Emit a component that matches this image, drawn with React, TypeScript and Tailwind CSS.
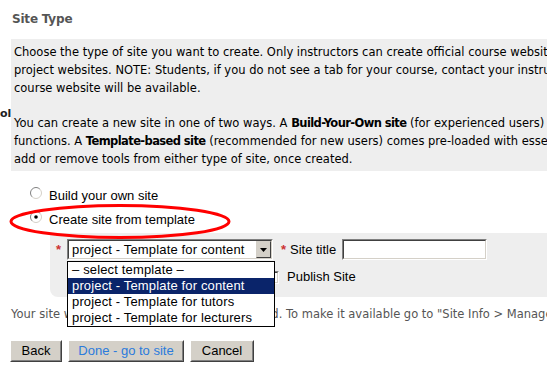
import React from "react";

const lib = "font-['Liberation_Sans',Arial,sans-serif]";

function Radio({ checked = false }: { checked?: boolean }) {
  return (
    <svg width="12" height="12" viewBox="0 0 12 12" className="mt-[3px] shrink-0">
      <circle cx="6" cy="6" r="5.5" fill="#fff" />
      <path d="M2.11 9.89A5.5 5.5 0 0 1 9.89 2.11" fill="none" stroke="#808080" />
      <path d="M9.89 2.11A5.5 5.5 0 0 1 2.11 9.89" fill="none" stroke="#d4d0c8" />
      {checked && <circle cx="6" cy="6" r="1.8" fill="#000" />}
    </svg>
  );
}

function Sunken({ className = "", children }: { className?: string; children?: React.ReactNode }) {
  return (
    <div className={`border border-t-[#808080] border-l-[#808080] border-b-white border-r-white ${className}`}>
      <div className="flex h-full border border-t-[#404040] border-l-[#404040] border-b-[#d4d0c8] border-r-[#d4d0c8] bg-white">
        {children}
      </div>
    </div>
  );
}

function Btn({ w, children, blue = false }: { w: string; children: React.ReactNode; blue?: boolean }) {
  return (
    <button
      className={`${w} h-[22px] border border-t-white border-l-white border-b-[#404040] border-r-[#404040] bg-[#d4d0c8] p-0`}
    >
      <div
        className={`flex h-full items-center justify-center border border-t-[#d4d0c8] border-l-[#d4d0c8] border-b-[#808080] border-r-[#808080] text-[13px] leading-[18px] ${
          blue ? "text-[#2b7bdc]" : "text-black"
        }`}
      >
        {children}
      </div>
    </button>
  );
}

const options = [
  "– select template –",
  "project - Template for content",
  "project - Template for tutors",
  "project - Template for lecturers",
];

export default function App() {
  return (
    <div className="relative h-[371px] w-[547px] overflow-hidden bg-white font-['DejaVu_Sans',Verdana,sans-serif] text-[11.5px] text-black">
      <h2 className="ml-[12px] pt-[11px] text-[12px] font-bold leading-[16px] tracking-[-0.2px] text-[#555]">
        Site Type
      </h2>

      <div className="mt-[12px] flex">
        <div className="w-[11px] shrink-0 overflow-hidden pt-[69px] text-[11px] font-bold leading-[12px] text-[#222]">
          ol
        </div>
        <div className="flex-1 whitespace-nowrap bg-[#eeeeee] px-[3px] pb-[3px] pt-[4px] leading-[18px]">
          <p>
            Choose the type of site you want to create. Only instructors can create official course websites and
            <br />
            project websites. NOTE: Students, if you do not see a tab for your course, contact your instructor. Your
            <br />
            course website will be available.
          </p>
          <p className="mt-[17px]">
            You can create a new site in one of two ways. A{" "}
            <b className="tracking-[-0.6px]">Build-Your-Own site</b> (for experienced users) lets you choose
            <br />
            functions. A <b className="tracking-[-0.6px]">Template-based site</b> (recommended for new users) comes
            pre-loaded with essential tools.
            <br />
            add or remove tools from either type of site, once created.
          </p>
        </div>
      </div>

      <div className={`ml-[30px] mt-[13px] ${lib} text-[13px]`}>
        <label className="flex h-[24px] items-start">
          <Radio />
          <span className="ml-[7px] leading-[24px]">Build your own site</span>
        </label>
        <label className="flex h-[24px] items-start">
          <Radio checked />
          <span className="ml-[7px] leading-[24px]">Create site from template</span>
        </label>
      </div>

      <div className={`ml-[50px] mt-[1px] h-[64px] rounded-bl-[8px] bg-[#eeeeee] pl-[6px] pt-[6px] ${lib} text-[13px]`}>
        <div className="flex items-start">
          <span className="w-[11px] font-bold leading-[21px] text-[#cc3333]">*</span>
          <div className="relative">
            <Sunken className="h-[21px] w-[206px]">
              <span className="flex-1 pl-[3px] leading-[17px] tracking-[0.15px]">project - Template for content</span>
              <span className="flex h-[17px] w-[15px] items-center justify-center border border-t-[#d4d0c8] border-l-[#d4d0c8] border-b-[#404040] border-r-[#404040] bg-[#d4d0c8]">
                <svg width="7" height="4" viewBox="0 0 7 4">
                  <polygon points="0,0 7,0 3.5,4" fill="#000" />
                </svg>
              </span>
            </Sunken>
            <ul className="absolute left-0 top-[22px] z-10 w-[208px] border border-black bg-white">
              {options.map((o, i) => (
                <li
                  key={o}
                  className={`h-[16px] px-[4px] leading-[16px] tracking-[0.15px] ${
                    i === 1 ? "bg-[#0a246a] text-white" : "text-black"
                  }`}
                >
                  {o}
                </li>
              ))}
            </ul>
          </div>
          <span className="ml-[8px] w-[9px] font-bold leading-[21px] text-[#cc3333]">*</span>
          <span className="leading-[21px]">Site title</span>
          <Sunken className="ml-[6px] h-[21px] w-[145px]" />
        </div>
        <div className="ml-[210px] mt-[9px] flex items-center">
          <Sunken className="h-[13px] w-[13px]" />
          <span className="ml-[8px] leading-[16px]">Publish Site</span>
        </div>
      </div>

      <p className="ml-[11px] mt-[8px] whitespace-nowrap leading-[18px] text-[#555]">
        Your site will be created, but not yet published. To make it available go to "Site Info &gt; Manage Access".
      </p>

      <div className={`ml-[10px] mt-[17px] flex gap-[6px] ${lib}`}>
        <Btn w="w-[52px]">Back</Btn>
        <Btn w="w-[116px]" blue>
          Done - go to site
        </Btn>
        <Btn w="w-[64px]">Cancel</Btn>
      </div>

      <svg className="pointer-events-none absolute inset-0 z-20" width="547" height="371">
        <ellipse cx="120" cy="221.5" rx="109" ry="16" fill="none" stroke="#ff0000" strokeWidth="3" />
      </svg>
    </div>
  );
}
